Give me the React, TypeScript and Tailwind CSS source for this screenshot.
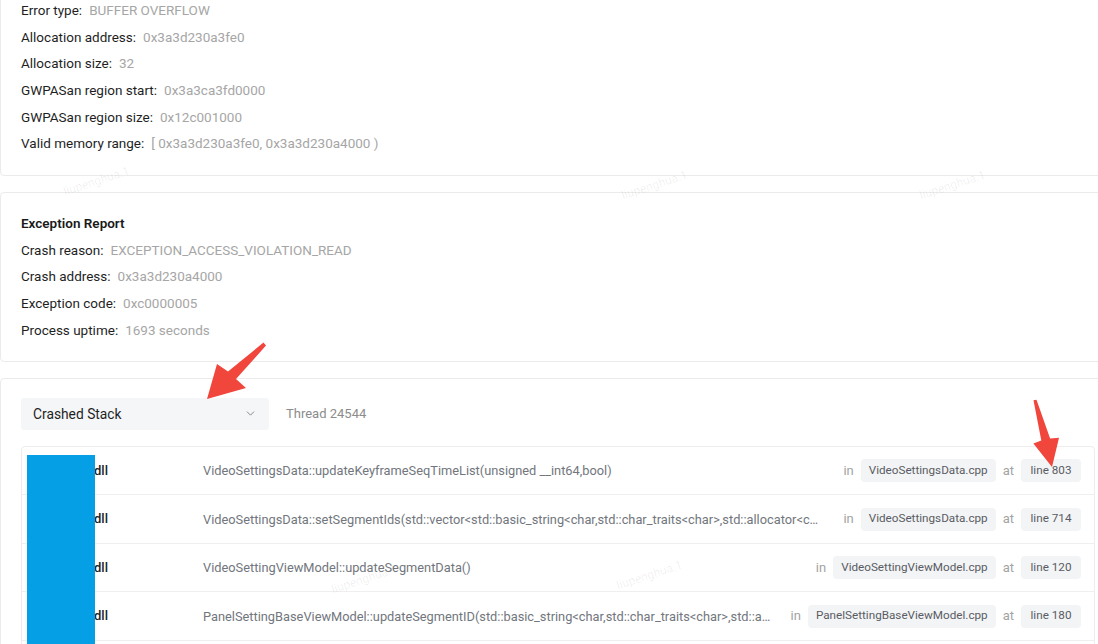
import { ChevronDown } from "lucide-react";

const errorInfo = [
  { label: "Error type:", value: "BUFFER OVERFLOW" },
  { label: "Allocation address:", value: "0x3a3d230a3fe0" },
  { label: "Allocation size:", value: "32" },
  { label: "GWPASan region start:", value: "0x3a3ca3fd0000" },
  { label: "GWPASan region size:", value: "0x12c001000" },
  { label: "Valid memory range:", value: "[ 0x3a3d230a3fe0, 0x3a3d230a4000 )" },
];

const exceptionInfo = [
  { label: "Crash reason:", value: "EXCEPTION_ACCESS_VIOLATION_READ" },
  { label: "Crash address:", value: "0x3a3d230a4000" },
  { label: "Exception code:", value: "0xc0000005" },
  { label: "Process uptime:", value: "1693 seconds" },
];

const frames = [
  {
    fn: "VideoSettingsData::updateKeyframeSeqTimeList(unsigned __int64,bool)",
    file: "VideoSettingsData.cpp",
    line: 803,
  },
  {
    fn: "VideoSettingsData::setSegmentIds(std::vector<std::basic_string<char,std::char_traits<char>,std::allocator<char> >,std::allocator<std::basic_string<char> > > const &)",
    file: "VideoSettingsData.cpp",
    line: 714,
  },
  {
    fn: "VideoSettingViewModel::updateSegmentData()",
    file: "VideoSettingViewModel.cpp",
    line: 120,
  },
  {
    fn: "PanelSettingBaseViewModel::updateSegmentID(std::basic_string<char,std::char_traits<char>,std::allocator<char> > const &)",
    file: "PanelSettingBaseViewModel.cpp",
    line: 180,
  },
  {
    fn: "PanelSettingBaseViewModel::onSegmentChanged()",
    file: "PanelSettingBaseViewModel.cpp",
    line: 96,
  },
];

const watermarks = [
  { x: 62, y: 172 },
  { x: 620, y: 176 },
  { x: 918, y: 176 },
  { x: 330, y: 570 },
  { x: 615, y: 566 },
];

function InfoRow({ label, value }: { label: string; value: string }) {
  return (
    <div className="flex items-center h-[26.6px] gap-[7px] text-[13.5px]">
      <span className="text-[#1f1f1f]">{label}</span>
      <span className="text-[#a6a6a6]">{value}</span>
    </div>
  );
}

function Card({ className = "", children }: { className?: string; children: React.ReactNode }) {
  return (
    <div className={`w-[1114px] bg-white border border-[#ebebeb] rounded-[4px] px-[20px] ${className}`}>
      {children}
    </div>
  );
}

export default function App() {
  return (
    <div
      className="relative w-[1098px] h-[644px] overflow-hidden bg-white text-[13px]"
      style={{ fontFamily: "Roboto, 'Noto Sans', Arial, sans-serif" }}
    >
      <div className="flex flex-col gap-[16px] -mt-[21px]">
        <Card className="pt-[17px] pb-[18px]">
          {errorInfo.map((r) => (
            <InfoRow key={r.label} {...r} />
          ))}
        </Card>

        <Card className="pt-[17px] pb-[18px]">
          <div className="h-[27px] flex items-center text-[#1a1a1a] font-semibold text-[13.5px]">
            Exception Report
          </div>
          {exceptionInfo.map((r) => (
            <InfoRow key={r.label} {...r} />
          ))}
        </Card>

        <Card className="pt-[19px] pb-[20px]">
          <div className="flex items-center gap-[17px]">
            <div className="w-[248px] h-[32px] bg-[#f5f6f8] rounded-[3px] flex items-center justify-between pl-[12px] pr-[12px]">
              <span className="text-[#1f1f1f] text-[13.8px]">Crashed Stack</span>
              <ChevronDown size={13} strokeWidth={1.6} className="text-[#777]" />
            </div>
            <span className="text-[#8c8c8c]">Thread 24544</span>
          </div>

          <div className="mt-[16px] w-[1074px] border border-[#ededed] rounded-[4px]">
            {frames.map((f) => (
              <div
                key={f.fn}
                className="flex items-center h-[48.5px] border-b border-[#efefef] pr-[13px]"
              >
                <div className="w-[181px] shrink-0 pl-[72px] text-[#222] font-medium">dll</div>
                <div className="flex-1 min-w-0 truncate text-[#72767d] text-[12.8px]">{f.fn}</div>
                <div className="flex items-center shrink-0 ml-[20px]">
                  <span className="text-[#a3a3a3] mr-[7px]">in</span>
                  <span className="h-[23px] flex items-center px-[8px] bg-[#f3f4f6] rounded-[4px] text-[#595c63] text-[11.7px]">
                    {f.file}
                  </span>
                  <span className="text-[#a3a3a3] mx-[7px]">at</span>
                  <span className="w-[60px] h-[23px] flex items-center justify-center bg-[#f3f4f6] rounded-[4px] text-[#595c63] text-[11.7px]">
                    line {f.line}
                  </span>
                </div>
              </div>
            ))}
          </div>
        </Card>
      </div>

      {/* redaction block */}
      <div className="absolute left-[27px] top-[455px] w-[68px] h-[200px] bg-[#049fe4]" />

      {/* watermarks */}
      {watermarks.map((w) => (
        <span
          key={`${w.x}-${w.y}`}
          className="absolute text-[12px] text-black/[0.07] -rotate-[18deg] pointer-events-none select-none"
          style={{ left: w.x, top: w.y }}
        >
          liupenghua.1
        </span>
      ))}

      {/* annotation arrows */}
      <svg className="absolute inset-0 pointer-events-none" width="1098" height="644">
        <polygon
          fill="#f0463c"
          points="207,399 246,388 236,379 266,345.5 263.5,342.5 228,371.5 217,364"
        />
        <polygon
          fill="#f0463c"
          points="1052,467 1059,437.8 1050.1,438.6 1036.5,399.7 1033.5,400.3 1041.3,440.6 1033.4,443.4"
        />
      </svg>
    </div>
  );
}
